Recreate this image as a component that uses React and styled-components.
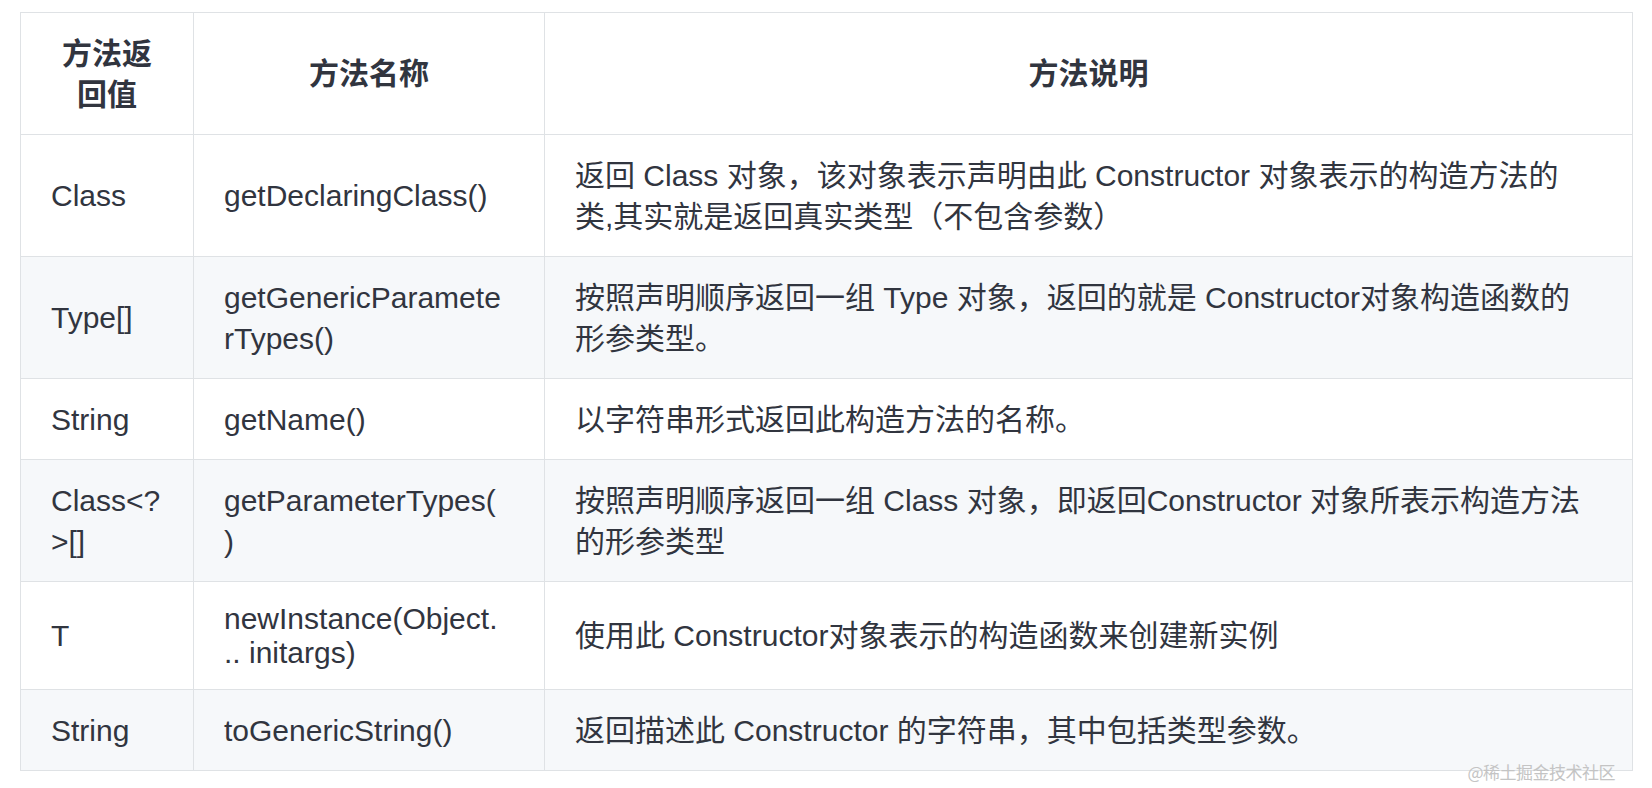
import React from 'react';
import styled, { createGlobalStyle } from 'styled-components';

const GlobalStyle = createGlobalStyle`
  html, body {
    margin: 0;
    padding: 0;
    background: #fff;
  }
  body {
    font-family: "Liberation Sans", "Noto Sans CJK SC", sans-serif;
    color: #31353f;
  }
`;

const Page = styled.div`
  position: relative;
  width: 1652px;
  height: 788px;
  padding: 12px 19px 0 20px;
  box-sizing: border-box;
  background: #fff;
`;

const Table = styled.table`
  width: 1613px;
  border-collapse: collapse;
  table-layout: fixed;
  font-size: 30px;
  line-height: 41px;
`;

const Row = styled.tr`
  background: ${({ $striped }) => ($striped ? '#f6f8fa' : '#fff')};
`;

const HeadCell = styled.th`
  border: 1px solid #dfe2e5;
  padding: 19.5px 30px;
  font-weight: 700;
  text-align: center;
  vertical-align: middle;
  color: #31353f;
`;

const Cell = styled.td`
  border: 1px solid #dfe2e5;
  padding: 19.5px ${({ $padRight }) => $padRight || 30}px 19.5px 30px;
  line-height: ${({ $tight }) => ($tight ? '34px' : '41px')};
  text-align: left;
  vertical-align: middle;
  overflow-wrap: anywhere;
  color: #31353f;
`;

const Watermark = styled.span`
  position: absolute;
  right: 37px;
  top: 762px;
  font-family: "Noto Sans CJK SC", sans-serif;
  font-size: 17px;
  line-height: 20px;
  color: #c4c4c4;
  letter-spacing: -0.5px;
`;

const rows = [
  ['Class', 'getDeclaringClass()', '返回 Class 对象，该对象表示声明由此 Constructor 对象表示的构造方法的类,其实就是返回真实类型（不包含参数）'],
  ['Type[]', 'getGenericParameterTypes()', '按照声明顺序返回一组 Type 对象，返回的就是 Constructor对象构造函数的形参类型。'],
  ['String', 'getName()', '以字符串形式返回此构造方法的名称。'],
  ['Class<?>[]', 'getParameterTypes()', '按照声明顺序返回一组 Class 对象，即返回Constructor 对象所表示构造方法的形参类型'],
  ['T', 'newInstance(Object... initargs)', '使用此 Constructor对象表示的构造函数来创建新实例', true],
  ['String', 'toGenericString()', '返回描述此 Constructor 的字符串，其中包括类型参数。'],
];

export default function App() {
  return (
    <Page>
      <GlobalStyle />
      <Table>
        <colgroup>
          <col style={{ width: 173 }} />
          <col style={{ width: 351 }} />
          <col />
        </colgroup>
        <thead>
          <Row>
            <HeadCell>方法返回值</HeadCell>
            <HeadCell>方法名称</HeadCell>
            <HeadCell>方法说明</HeadCell>
          </Row>
        </thead>
        <tbody>
          {rows.map(([type, name, desc, tight], i) => (
            <Row key={name} $striped={i % 2 === 1}>
              <Cell>{type}</Cell>
              <Cell $padRight={41} $tight={tight}>{name}</Cell>
              <Cell $padRight={40}>{desc}</Cell>
            </Row>
          ))}
        </tbody>
      </Table>
      <Watermark>@稀土掘金技术社区</Watermark>
    </Page>
  );
}
